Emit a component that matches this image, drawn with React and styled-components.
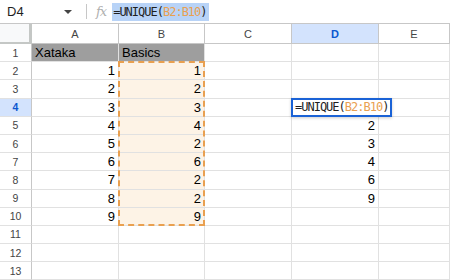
import React from "react";
import styled, { createGlobalStyle } from "styled-components";

const Global = createGlobalStyle`
  html, body { margin: 0; padding: 0; background: #fff; }
  body { font-family: "Liberation Sans", Arial, sans-serif; overflow: hidden; }
`;

const Page = styled.div`
  width: 450px;
  height: 280px;
  overflow: hidden;
  background: #fff;
`;

const FormulaBar = styled.div`
  height: 24px;
  display: flex;
  align-items: center;
  border-bottom: 1px solid #c7c7c7;
  box-sizing: border-box;
`;

const NameBox = styled.div`
  width: 78px;
  padding-left: 7px;
  box-sizing: border-box;
  display: flex;
  align-items: center;
  justify-content: space-between;
  font-size: 13px;
  color: #1f1f1f;
  padding-right: 6px;
`;

const Caret = styled.span`
  width: 0;
  height: 0;
  border-left: 4px solid transparent;
  border-right: 4px solid transparent;
  border-top: 4px solid #444;
`;

const Divider = styled.div`
  width: 1px;
  height: 15px;
  background: #c7c7c7;
  margin: 0 9px 0 8px;
`;

const Fx = styled.span`
  font-family: "DejaVu Serif", serif;
  font-style: italic;
  font-size: 13px;
  color: #b0b0b0;
  margin-right: 6px;
  letter-spacing: -1px;
`;

const FormulaText = styled.span`
  font-family: "DejaVu Sans Mono", "Liberation Mono", monospace;
  font-size: 12px;
  letter-spacing: -1px;
  color: #1f1f1f;
  background: ${(p) => (p.$selected ? "#b8d3f7" : "transparent")};
  padding: 2px 2px 2px 1px;
  line-height: 14px;
  white-space: nowrap;
`;

const Ref = styled.span`
  color: #e9a050;
`;

const Grid = styled.div`
  display: grid;
  grid-template-columns: 32px 87px 86px 87px 87px 1fr;
  grid-template-rows: 20px repeat(13, 18.2px);
  position: relative;
`;

const Corner = styled.div`
  grid-column: 1;
  grid-row: 1;
  background: #f8f9fa;
  border-right: 3px solid #c4c7c5;
  border-bottom: 3px solid #c4c7c5;
  margin-bottom: -1px;
  box-sizing: border-box;
`;

const ColHead = styled.div`
  grid-row: 1;
  display: flex;
  align-items: center;
  justify-content: center;
  font-size: 11px;
  color: ${(p) => (p.$active ? "#0b57d0" : "#444")};
  font-weight: ${(p) => (p.$active ? "bold" : "normal")};
  background: ${(p) => (p.$active ? "#d3e3fd" : "#fff")};
  border-right: 1px solid #c7c7c7;
  border-bottom: 1px solid #c7c7c7;
  box-sizing: border-box;
`;

const RowHead = styled.div`
  grid-column: 1;
  display: flex;
  align-items: center;
  justify-content: center;
  font-size: 10.5px;
  color: ${(p) => (p.$active ? "#0b57d0" : "#444")};
  font-weight: ${(p) => (p.$active ? "bold" : "normal")};
  background: ${(p) => (p.$active ? "#d3e3fd" : "#fff")};
  border-right: 1px solid #c7c7c7;
  border-bottom: 1px solid #e1e1e1;
  box-sizing: border-box;
`;

const Cell = styled.div`
  display: flex;
  align-items: center;
  justify-content: ${(p) => (p.$num ? "flex-end" : "flex-start")};
  padding: 0 3px;
  font-size: 13px;
  color: #000;
  background: ${(p) => p.$bg || "#fff"};
  border-right: 1px solid #e1e1e1;
  border-bottom: 1px solid #e1e1e1;
  box-sizing: border-box;
  overflow: hidden;
  white-space: nowrap;
`;

const Marching = styled.div`
  grid-column: 3;
  grid-row: 3 / 12;
  border: 2px dashed #e9a050;
  margin: -1px 0 0 -1px;
  pointer-events: none;
  z-index: 2;
`;

const Editor = styled.div`
  grid-column: 5;
  grid-row: 5;
  width: 101px;
  height: 19px;
  margin: -1px 0 0 -1px;
  border: 2px solid #1a62d6;
  box-sizing: border-box;
  background: #fff;
  display: flex;
  align-items: center;
  padding-left: 1px;
  z-index: 3;
  box-shadow: 0 1px 3px rgba(0,0,0,0.2);
`;

const cols = ["A", "B", "C", "D", "E"];
const colA = [1, 2, 3, 4, 5, 6, 7, 8, 9];
const colB = [1, 2, 3, 4, 2, 6, 2, 2, 9];
const colD = { 5: 2, 6: 3, 7: 4, 8: 6, 9: 9 };

function Formula({ selected }) {
  return (
    <FormulaText $selected={selected}>
      =UNIQUE(<Ref>B2:B10</Ref>)
    </FormulaText>
  );
}

export default function App() {
  const rows = [];
  for (let r = 1; r <= 13; r++) {
    const gr = r + 1;
    rows.push(
      <RowHead key={`h${r}`} $active={r === 4} style={{ gridRow: gr }}>
        {r}
      </RowHead>
    );
    cols.forEach((c, i) => {
      let content = "";
      let num = true;
      let bg;
      if (r === 1 && c === "A") { content = "Xataka"; num = false; bg = "#9e9e9e"; }
      else if (r === 1 && c === "B") { content = "Basics"; num = false; bg = "#9e9e9e"; }
      else if (c === "A" && r >= 2 && r <= 10) content = colA[r - 2];
      else if (c === "B" && r >= 2 && r <= 10) { content = colB[r - 2]; bg = "#fdf3e6"; }
      else if (c === "D" && colD[r]) content = colD[r];
      rows.push(
        <Cell key={`${c}${r}`} $num={num} $bg={bg} style={{ gridRow: gr, gridColumn: i + 2 }}>
          {content}
        </Cell>
      );
    });
  }
  return (
    <Page>
      <Global />
      <FormulaBar>
        <NameBox>
          D4
          <Caret />
        </NameBox>
        <Divider />
        <Fx>fx</Fx>
        <Formula selected />
      </FormulaBar>
      <Grid>
        <Corner />
        {cols.map((c, i) => (
          <ColHead key={c} $active={c === "D"} style={{ gridColumn: i + 2 }}>
            {c}
          </ColHead>
        ))}
        {rows}
        <Marching />
        <Editor>
          <Formula />
        </Editor>
      </Grid>
    </Page>
  );
}
